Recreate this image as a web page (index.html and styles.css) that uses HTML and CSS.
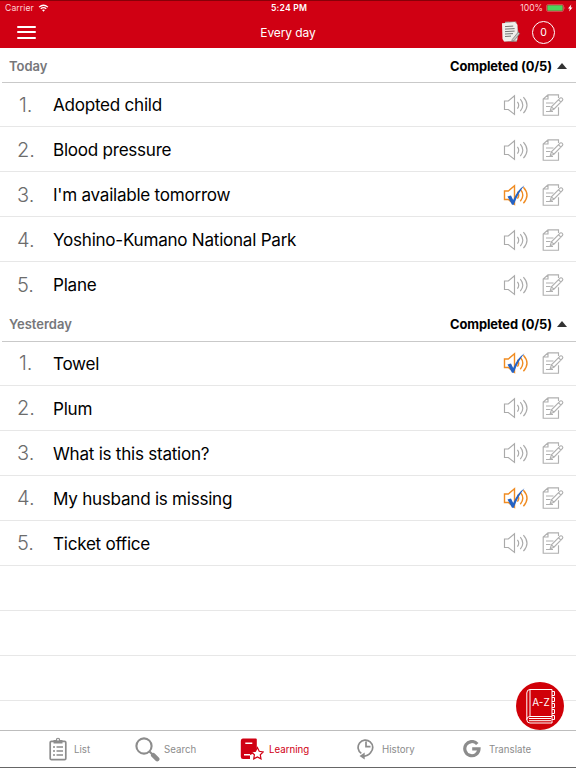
FILE: index.html
```html
<!DOCTYPE html>
<html lang="en">
<head>
<meta charset="utf-8">
<title>Every day</title>
<link rel="stylesheet" href="styles.css">
</head>
<body>
<svg class="defs" aria-hidden="true">
  <symbol id="speaker" viewBox="0 0 26 24"><path d="M1.5 8h3.8l6.2-5.2v18.6L5.3 16.5H1.5z"/><path d="M14.4 8.8q2.6 3.3 0 6.8M17.3 6.2q5 6 0 12M20.4 4.2q7.2 8 0 16"/></symbol>
  <symbol id="check" viewBox="0 0 26 24"><path d="M4.5 13.4 8 12.6l2.2 4.4Q14.2 7 21.5 2.2 15 10 10.8 21.8H9z"/></symbol>
  <symbol id="note" viewBox="0 0 24 24"><path d="M17.5 5V1.8H7L2.2 6v16.2h15.3v-8M7 1.8V6H2.2M5 10h7.5M5 13.5h4.5M5 18.5h7"/><path d="m9.2 17.8 1.2-4 8.7-8.7q1.2-.8 2.2.2t.2 2.2l-8.6 8.7zM10.4 13.8l2.5 2.4M17.6 6.8l2.4 2.4"/></symbol>
</svg>
<header class="top">
  <div class="status">
    <div class="carrier">Carrier
      <svg class="wifi" viewBox="0 0 12 9"><path d="M1 3.5q5-4.2 10 0M2.9 5.4q3.1-2.5 6.2 0"/><path class="dot" d="M4.3 6.8q1.7-1.3 3.4 0L6 8.6z"/></svg>
    </div>
    <div class="time">5:24 PM</div>
    <div class="power">100%
      <svg class="battery" viewBox="0 0 28 8"><rect class="shell" x=".5" y=".5" width="17" height="7" rx="1.5"/><rect class="charge" x="1.3" y="1.3" width="15.4" height="5.4" rx=".6"/><path class="tip" d="M18.5 2.6q1.4 1.4 0 2.8z"/><path class="bolt" d="m25.3.6-3.3 4h1.8l-.7 3 3.4-4.1h-1.9z"/></svg>
    </div>
  </div>
  <div class="nav">
    <div class="burger"><i></i><i></i><i></i></div>
    <h1>Every day</h1>
    <div class="actions">
      <svg class="notes" viewBox="0 0 20 22"><path class="back" d="m4 .8 11.2-.4 2.5 11.8-2 8.5-12.5-.2z"/><path class="page" d="M1 2.2 13.7 1l2.8 2.8-.3 15.5L3 20.5 1.5 18z"/><path class="text" d="m4 5.6 8.2-.5M4 8.1l9.6-.5M4 10.6l9.6-.5M4 13l8-.4M4 15.5l6-.4"/><path class="pencil" d="m11.2 18.5 6-7.3 1.6 1.3-5.6 7-2.4 1z"/></svg>
      <div class="counter">0</div>
    </div>
  </div>
</header>
<main>
  <section>
    <div class="head"><h2>Today</h2><span class="done">Completed (0/5)</span><i class="arrow"></i></div>
    <ol>
      <li><span class="num">1.</span><span class="word">Adopted child</span><svg class="sound"><use href="#speaker"/></svg><svg class="edit"><use href="#note"/></svg></li>
      <li><span class="num">2.</span><span class="word">Blood pressure</span><svg class="sound"><use href="#speaker"/></svg><svg class="edit"><use href="#note"/></svg></li>
      <li><span class="num">3.</span><span class="word">I'm available tomorrow</span><svg class="sound heard"><use href="#speaker"/><use class="tick" href="#check"/></svg><svg class="edit"><use href="#note"/></svg></li>
      <li><span class="num">4.</span><span class="word">Yoshino-Kumano National Park</span><svg class="sound"><use href="#speaker"/></svg><svg class="edit"><use href="#note"/></svg></li>
      <li class="last"><span class="num">5.</span><span class="word">Plane</span><svg class="sound"><use href="#speaker"/></svg><svg class="edit"><use href="#note"/></svg></li>
    </ol>
  </section>
  <section class="earlier">
    <div class="head"><h2>Yesterday</h2><span class="done">Completed (0/5)</span><i class="arrow"></i></div>
    <ol>
      <li><span class="num">1.</span><span class="word">Towel</span><svg class="sound heard"><use href="#speaker"/><use class="tick" href="#check"/></svg><svg class="edit"><use href="#note"/></svg></li>
      <li><span class="num">2.</span><span class="word">Plum</span><svg class="sound"><use href="#speaker"/></svg><svg class="edit"><use href="#note"/></svg></li>
      <li><span class="num">3.</span><span class="word">What is this station?</span><svg class="sound"><use href="#speaker"/></svg><svg class="edit"><use href="#note"/></svg></li>
      <li><span class="num">4.</span><span class="word">My husband is missing</span><svg class="sound heard"><use href="#speaker"/><use class="tick" href="#check"/></svg><svg class="edit"><use href="#note"/></svg></li>
      <li><span class="num">5.</span><span class="word">Ticket office</span><svg class="sound"><use href="#speaker"/></svg><svg class="edit"><use href="#note"/></svg></li>
      <li></li><li></li><li></li>
    </ol>
  </section>
</main>
<div class="dictionary">
  <svg viewBox="0 0 48 48"><path d="M10.8 38V11q0-3.5 3.2-3.5h22v27H14q-3.2 0-3.2 3.2T14 41h22v-6.5M14 7.5v27M13 36.5h22M13 38.7h22"/><path d="M36 9.5h2.5v4H36M36 15.5h2.5v4H36M36 21.5h2.5v4H36M36 27.5h2.5v4H36M36 33.5h2.5v4H36"/></svg>
  <span>A-Z</span>
</div>
<nav class="tabs">
  <a class="list"><svg viewBox="0 0 18 24"><rect class="line" x="1.2" y="4.4" width="15.6" height="18.2" rx="1.2"/><path class="fill" d="M4.5 3h2.3q0-2.3 2.2-2.3T11.2 3h2.3v3.4h-9z"/><circle cx="9" cy="2.7" r=".9" fill="#fff"/><path class="line thin" d="M7.5 10H14M7.5 14H14M7.5 18H14M4 10h2M4 14h2M4 18h2"/></svg>List</a>
  <a class="search"><svg viewBox="0 0 25 25"><circle class="line" cx="9" cy="9" r="7.6"/><path class="line" d="m14.5 14.5 3 3"/><path class="line handle" d="m18.2 18.2 4 4"/></svg>Search</a>
  <a class="learning"><svg viewBox="0 0 24 22"><path class="fill" d="M3 .5h12.8q1 0 1 1v12.8L10 17v4H3Q.8 21 .8 18.5v-15Q.8.5 3 .5z"/><path d="M5.3 5.3h7M4 16.8h6" stroke="#fff" stroke-width="1.5"/><path class="star" d="m17.4 9.6 1.8 3.7 4.1.6-3 2.9.7 4.1-3.6-1.9-3.7 1.9.7-4.1-3-2.9 4.1-.6z"/></svg>Learning</a>
  <a class="history"><svg viewBox="0 0 18 22"><path class="line" d="M4.3 15.4A7.3 7.3 0 1 1 13.7 14.4q-2.6 3.4-8 4M9 3.5v5.2h4.5"/><path class="fill" d="m2.5 18 5.2-3.4v6.8z"/></svg>History</a>
  <a class="translate"><svg viewBox="0 0 18 18"><path class="line" d="M14.3 4A7.1 7.1 0 1 0 16 8.9H9.2"/></svg>Translate</a>
</nav>
</body>
</html>
```

FILE: styles.css
```css
* { box-sizing: border-box; }
body {
  margin: 0;
  height: 768px;
  display: flex;
  flex-direction: column;
  overflow: hidden;
  position: relative;
  background: #fff;
  font-family: Inter, "Liberation Sans", sans-serif;
  color: #000;
}
svg { fill: none; flex: none; }
.defs { position: absolute; width: 0; height: 0; }
h1, h2, ol { margin: 0; padding: 0; font-weight: 400; list-style: none; }

.top { height: 48px; flex: none; background: #d00013; border-top: 1px solid #870008; color: #fff; }
.status { height: 14px; display: grid; grid-template-columns: 1fr 80px 1fr; align-items: center; padding: 0 4px 0 5px; font-size: 8.6px; }
.carrier, .power { display: flex; align-items: center; color: #ffd5d7; }
.carrier { gap: 4px; letter-spacing: .1px; }
.power { justify-content: flex-end; gap: 3px; }
.time { text-align: center; font-weight: 600; font-size: 8.6px; letter-spacing: .2px; padding-left: 1px; }
.wifi { width: 11px; height: 8px; stroke: #fff; stroke-width: 1.4; }
.wifi .dot { fill: #fff; stroke: none; }
.battery { width: 28px; height: 8px; margin-right: -2px; }
.shell { stroke: #d8656b; stroke-width: .7; }
.charge { fill: #4bd45c; }
.tip { fill: #d8656b; }
.bolt { fill: #fff; }
.nav { height: 33px; display: grid; grid-template-columns: 1fr 120px 1fr; align-items: center; padding: 1px 21px 0 17px; }
.burger { display: flex; flex-direction: column; gap: 3.5px; width: 19px; }
.burger i { height: 2px; border-radius: 1px; background: #fff; }
.nav h1 { font-size: 12px; text-align: center; padding-left: 4px; letter-spacing: -.1px; white-space: nowrap; }
.actions { display: flex; justify-content: flex-end; align-items: center; gap: 11px; }
.notes { width: 20px; height: 22px; }
.notes .back { fill: #a5a19c; }
.notes .page { fill: #f0efec; }
.notes .text { stroke: #666; stroke-width: .9; }
.notes .pencil { fill: #c9c9c5; stroke: #666; stroke-width: .6; }
.counter { width: 23px; height: 23px; border: 1.8px solid #fff; border-radius: 50%; display: grid; place-items: center; font-size: 10.5px; }

main { flex: 1; min-height: 0; overflow: hidden; }
.head { height: 35px; display: flex; align-items: center; padding: 1px 9px 0 9px; background: linear-gradient(#c9c9c9, #c9c9c9) 2px 100% / 100% 1px no-repeat; font-size: 13px; font-weight: 600; }
.head h2 { flex: 1; font-size: 13px; font-weight: 600; color: #76777a; }
.done { font-size: 12.9px; font-weight: 700; letter-spacing: -.11px; }
.arrow { margin-left: 5px; border: 5px solid transparent; border-top: 0; border-bottom: 6px solid #333; }
li { height: 45px; display: flex; align-items: center; padding: 1px 11px 0 17px; border-bottom: 1px solid #e7e7e7; }
li:first-child { height: 44px; padding-top: 0; }
li.last { border-color: transparent; }
.earlier .head { padding-top: 0; padding-bottom: 1px; }
.earlier li { padding-top: 0; }
.earlier li:first-child { padding-bottom: 1px; }
.num { width: 36px; font-size: 20px; font-weight: 350; color: #6c6c6c; white-space: nowrap; }
li:first-child .num { padding-left: 2px; }
.word { flex: 1; font-size: 17.1px; letter-spacing: -.26px; }
.sound { width: 26px; height: 24px; stroke: #aaa; stroke-width: 1.15; margin-right: 12px; }
.heard { stroke: #f08c22; stroke-width: 1.4; }
.tick { fill: #2462c4; stroke: none; }
.edit { width: 24px; height: 24px; stroke: #b0b0b0; stroke-width: 1.15; }

.dictionary { position: absolute; left: 516px; top: 682px; width: 48px; height: 48px; border-radius: 50%; background: #d00008; display: grid; place-items: center; color: #fff; }
.dictionary svg { grid-area: 1 / 1; width: 48px; height: 48px; stroke: #fff; stroke-width: 1; }
.dictionary span { grid-area: 1 / 1; font-size: 10px; padding: 0 0 8px 2px; }

.tabs { height: 38px; flex: none; display: grid; grid-template-columns: 135px 105px 117px 106px 113px; border-top: 1px solid #bdbdbd; border-bottom: 1px solid #666; font-size: 9.7px; color: #8c8c8c; }
.tabs a { display: flex; align-items: center; }
.line { stroke: #8c8c8c; stroke-width: 1.7; }
.thin { stroke-width: 1.3; }
.fill { fill: #8c8c8c; }
.list { padding-left: 49px; gap: 7px; }
.list svg { width: 18px; height: 24px; }
.search { gap: 4px; }
.search svg { width: 25px; height: 25px; }
.search .line { stroke-width: 2.1; }
.search .handle { stroke-width: 4.5; stroke-linecap: round; }
.learning { color: #d00013; gap: 5px; }
.learning svg { width: 24px; height: 22px; }
.learning .fill { fill: #d00013; }
.star { fill: #fff; stroke: #d00013; stroke-width: 1.2; }
.history { gap: 7px; }
.history svg { width: 18px; height: 22px; }
.translate { gap: 8px; }
.translate svg { width: 18px; height: 18px; }
.translate .line { stroke-width: 3.2; }
```
